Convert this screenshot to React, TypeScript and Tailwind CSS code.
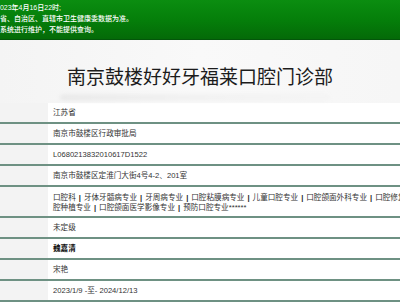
import React from "react";

const rows: { v: React.ReactNode; dark?: boolean }[] = [
  { v: "江苏省" },
  { v: "南京市鼓楼区行政审批局" },
  { v: "L0680213832010617D1522" },
  { v: "南京市鼓楼区定淮门大街4号4-2、201室" },
];

const rows2: { v: string; dark?: boolean }[] = [
  { v: "未定级" },
  { v: "魏嘉清", dark: true },
  { v: "宋艳" },
  { v: "2023/1/9 -至- 2024/12/13" },
];

function Sep() {
  return <span className="font-bold text-[#222] px-[3px]">|</span>;
}

export default function App() {
  const specs1 = ["口腔科", "牙体牙髓病专业", "牙周病专业", "口腔粘膜病专业", "儿童口腔专业", "口腔颌面外科专业", "口腔修复专业"];
  const specs2 = ["口腔颌面医学影像专业", "预防口腔专业******"];
  return (
    <div className="w-[400px] h-[304px] overflow-hidden bg-white font-['Liberation_Sans','Noto_Sans_CJK_SC',sans-serif]">
      <div className="h-[40px] bg-gradient-to-b from-[#0b8d10] via-[#057f0a] to-[#046a08] border-b border-[#03560a] pt-[2px] text-white text-[7px] leading-[11px] font-medium">
        <div className="-ml-[4px] whitespace-nowrap">2023年4月16日22时;</div>
        <div className="whitespace-nowrap">省、自治区、直辖市卫生健康委数据为准。</div>
        <div className="whitespace-nowrap">系统进行维护，不能提供查询。</div>
      </div>
      <div className="h-[63px] bg-gradient-to-r from-[#f4f4f4] via-[#f9f9f9] to-[#f6f6f6] relative">
        <div className="pt-[26px] text-center text-[19px] leading-[23px] text-[#1c1c1c]">
          南京鼓楼好好牙福莱口腔门诊部
        </div>
        <div className="absolute left-[60px] top-[55px] w-[270px] h-[5px] rounded-full bg-gradient-to-r from-[#e0e0e0] via-[#ebebeb] to-[#f2f2f2] blur-[2px] opacity-70" />
      </div>
      <div className="text-[7.6px] text-[#333]">
        {rows.map((r, i) => (
          <div key={i} className="flex h-[21px] border-b-2 border-[#6e9183]">
            <div className="w-[48px] bg-[#f3f3f3]" />
            <div className="flex-1 bg-white pl-[5px] flex items-center whitespace-nowrap">{r.v}</div>
          </div>
        ))}
        <div className="flex h-[31px] border-b-2 border-[#6e9183]">
          <div className="w-[48px] bg-[#f3f3f3]" />
          <div className="flex-1 bg-white pl-[5px] leading-[10px] overflow-hidden">
            <div className="whitespace-nowrap pt-[6px]">
              {specs1.map((s, i) => (
                <React.Fragment key={i}>
                  {s}
                  <Sep />
                </React.Fragment>
              ))}
              口
            </div>
            <div className="whitespace-nowrap">
              腔种植专业
              {specs2.map((s, i) => (
                <React.Fragment key={i}>
                  <Sep />
                  {s}
                </React.Fragment>
              ))}
            </div>
          </div>
        </div>
        {rows2.map((r, i) => (
          <div key={i} className="flex h-[21px] border-b-2 border-[#6e9183]">
            <div className="w-[48px] bg-[#f3f3f3]" />
            <div className={`flex-1 bg-white pl-[5px] flex items-center whitespace-nowrap ${r.dark ? "text-[#111] font-semibold" : ""}`}>{r.v}</div>
          </div>
        ))}
      </div>
    </div>
  );
}
